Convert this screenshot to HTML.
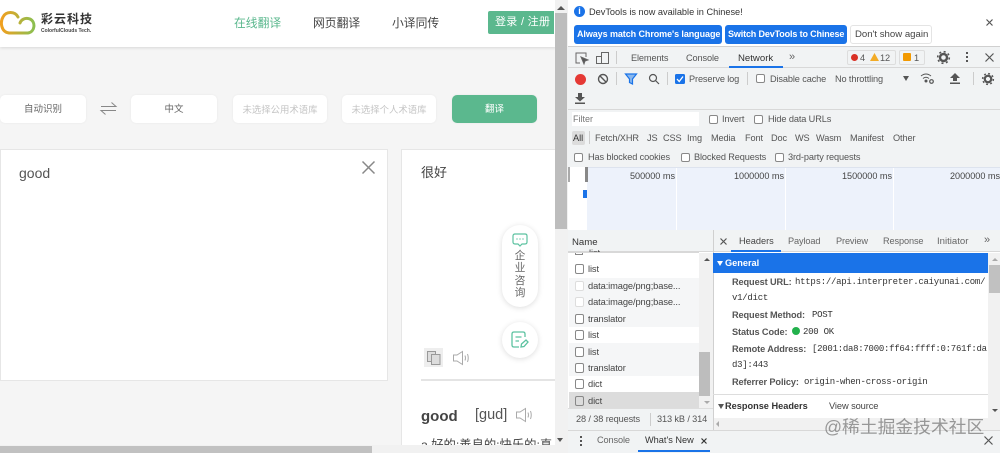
<!DOCTYPE html>
<html><head><meta charset="utf-8">
<style>
*{box-sizing:border-box}
html,body{margin:0;padding:0;width:1000px;height:453px;overflow:hidden;background:#f5f5f5;font-family:"Liberation Sans","Noto Sans CJK SC",sans-serif}
#w{position:absolute;left:0;top:0;width:1000px;height:453px;overflow:hidden;filter:blur(.3px)}
.t{position:absolute;white-space:nowrap;line-height:1}
.b{position:absolute}
.d{font-size:9.3px;letter-spacing:-.1px;color:#444}
.m{font-family:"Liberation Mono","DejaVu Sans Mono",monospace;font-size:9px;letter-spacing:-.26px;color:#333}
.k{font-weight:bold;font-size:9.2px;letter-spacing:-.1px;color:#555}
.c{position:absolute;width:9px;height:9px;border:1px solid #888;border-radius:2px;background:#fff}
.sel{position:absolute;top:95px;height:28px;background:#fff;border-radius:5px;font-size:9.5px;text-align:center;line-height:30px;box-shadow:0 0 2px rgba(0,0,0,.06)}
.g{font-size:9.2px;letter-spacing:-.12px;color:#555}
svg{position:absolute;overflow:visible}
</style></head><body><div id="w">

<!-- left page -->
<div class="b" style="left:0;top:0;width:556px;height:47px;background:#fff;box-shadow:0 1px 3px rgba(0,0,0,.12)"></div>
<svg style="left:0;top:10px" width="36" height="26" viewBox="0 0 36 26"><defs><linearGradient id="lg" x1="0" x2="1"><stop offset="0" stop-color="#f0a020"/><stop offset="1" stop-color="#8cbf50"/></linearGradient></defs><path d="M18 7C15 1 6 1 3 7C0 12 1 22 9 23H28C35 22 36 12 30 9C25 7 21 10 20 13" fill="none" stroke="url(#lg)" stroke-width="3" stroke-linecap="round"/></svg>
<div class="t" style="left:41px;top:13px;font-size:12px;font-weight:bold;color:#333;letter-spacing:1px">彩云科技</div>
<div class="t" style="left:41px;top:29px;font-size:5px;font-weight:bold;color:#444">ColorfulClouds Tech.</div>
<div class="t" style="left:234px;top:18px;font-size:11.8px;color:#5bb88e">在线翻译</div>
<div class="t" style="left:313px;top:18px;font-size:11.8px;color:#444">网页翻译</div>
<div class="t" style="left:392px;top:18px;font-size:11.8px;color:#444">小译同传</div>
<div class="b" style="left:488px;top:11px;width:66px;height:23px;background:#5bb88e;border-radius:2px 0 0 2px"></div>
<div class="t" style="left:495px;top:17px;font-size:11px;color:#fff;letter-spacing:.3px">登录 / 注册</div>

<div class="sel" style="left:0;width:86px;color:#666">自动识别</div>
<svg style="left:101px;top:102px" width="15" height="13" viewBox="0 0 15 13" fill="none" stroke="#888" stroke-width="1"><path d="M0 4.5H15L10.500 .5M15 8.500H0L4.500 12.500"/></svg>
<div class="sel" style="left:131px;width:86px;color:#666">中文</div>
<div class="sel" style="left:233px;width:94px;color:#c4c4c4;font-size:9.4px">未选择公用术语库</div>
<div class="sel" style="left:342px;width:94px;color:#c4c4c4;font-size:9.4px">未选择个人术语库</div>
<div class="sel" style="left:452px;width:85px;background:#5bb88e;color:#fff">翻译</div>

<div class="b" style="left:0;top:149px;width:388px;height:232px;background:#fff;border:1px solid #e6e6e6"></div>
<div class="t" style="left:19px;top:166px;font-size:14px;color:#555">good</div>
<svg style="left:362px;top:161px" width="13" height="13" viewBox="0 0 13 13" stroke="#888" stroke-width="1.500"><path d="M.5 .5L12.500 12.500M12.500 .5L.5 12.500"/></svg>

<div class="b" style="left:401px;top:149px;width:154px;height:296px;background:#fff;border-left:1px solid #e6e6e6;border-top:1px solid #e6e6e6"></div>
<div class="t" style="left:421px;top:166px;font-size:13px;color:#444">很好</div>
<div class="b" style="left:502px;top:225px;width:36px;height:82px;background:#fff;border-radius:18px;box-shadow:0 1px 6px rgba(0,0,0,.14)"></div>
<svg style="left:512px;top:233px" width="16" height="15" viewBox="0 0 16 15" fill="none" stroke="#5cc2a0" stroke-width="1.200"><path d="M3 1H13Q15 1 15 3V9Q15 11 13 11H10L8 13L6 11H3Q1 11 1 9V3Q1 1 3 1Z"/><path d="M4.500 6H5.500M7.500 6H8.500M10.500 6H11.500" stroke-width="1.400"/></svg>
<div class="t" style="left:514px;top:250px;font-size:10.8px;color:#666;line-height:12.3px;width:12px;white-space:normal;text-align:center">企业咨询</div>
<div class="b" style="left:502px;top:322px;width:36px;height:36px;background:#fff;border-radius:18px;box-shadow:0 1px 6px rgba(0,0,0,.14)"></div>
<svg style="left:511px;top:331px" width="18" height="18" viewBox="0 0 18 18" fill="none" stroke="#5cc2a0" stroke-width="1.300"><path d="M14 6V3Q14 1 12 1H3Q1 1 1 3V14Q1 16 3 16H8"/><path d="M4.500 6H10.500M4.500 10H8"/><path d="M10 16L10.500 13L15 9L17 11L13 15.500Z"/></svg>

<div class="b" style="left:424px;top:348px;width:19px;height:19px;background:#eeeeee"></div>
<svg style="left:427px;top:351px" width="14" height="14" viewBox="0 0 14 14" fill="#ddd" stroke="#999"><rect x=".5" y=".5" width="8" height="10"/><rect x="4.500" y="3.500" width="8.500" height="10"/></svg>
<svg style="left:453px;top:351px" width="17" height="14" viewBox="0 0 17 14" fill="none" stroke="#aaa"><path d="M.5 4H4L9.500 .5V13.500L4 10H.5Z"/><path d="M12 4.500Q13 7 12 9.500M14.500 3Q16 7 14.500 11"/></svg>
<div class="b" style="left:421px;top:379px;width:134px;height:2px;background:#e4e4e4"></div>
<div class="t" style="left:421px;top:409px;font-size:15px;font-weight:bold;color:#444">good</div>
<div class="t" style="left:475px;top:408px;font-size:14.5px;color:#555">[gud]</div>
<svg style="left:516px;top:408px" width="17" height="14" viewBox="0 0 17 14" fill="none" stroke="#aaa"><path d="M.5 4H4L9.500 .5V13.500L4 10H.5Z"/><path d="M12 4.500Q13 7 12 9.500M14.500 3Q16 7 14.500 11"/></svg>
<div class="t" style="left:421px;top:439px;font-size:12.3px;color:#444">a.好的;善良的;快乐的;真</div>

<!-- left scrollbars -->
<div class="b" style="left:0;top:445px;width:555px;height:8px;background:#f1f1f1"></div>
<div class="b" style="left:0;top:446px;width:372px;height:7px;background:#c1c1c1"></div>
<div class="b" style="left:555px;top:0;width:13px;height:453px;background:#f1f1f1"></div>
<div class="b" style="left:555px;top:13px;width:12px;height:216px;background:#bdbdbd"></div>
<div class="b" style="left:557px;top:6px;width:0;height:0;border:4px solid transparent;border-top:0;border-bottom:4px solid #555"></div>
<div class="b" style="left:557px;top:438px;width:0;height:0;border:3.5px solid transparent;border-bottom:0;border-top:4px solid #555"></div>

<!-- devtools -->
<div class="b" style="left:568px;top:0;width:432px;height:453px;background:#fff"></div>
<div class="b" style="left:574px;top:6px;width:11px;height:11px;border-radius:50%;background:#1a73e8;color:#fff;font-size:9px;font-weight:bold;text-align:center;line-height:11px">i</div>
<div class="t" style="left:589px;top:8px;font-size:9.2px;color:#333">DevTools is now available in Chinese!</div>
<div class="b" style="left:574px;top:25px;width:148px;height:19px;background:#1a73e8;border-radius:3px"></div>
<div class="t" style="left:577px;top:30px;font-size:9px;font-weight:bold;color:#fff;letter-spacing:-.08px">Always match Chrome's language</div>
<div class="b" style="left:725px;top:25px;width:122px;height:19px;background:#1a73e8;border-radius:3px"></div>
<div class="t" style="left:728px;top:30px;font-size:9px;font-weight:bold;color:#fff;letter-spacing:-.14px">Switch DevTools to Chinese</div>
<div class="b" style="left:850px;top:25px;width:82px;height:19px;background:#fff;border:1px solid #e4e4e4;border-radius:3px"></div>
<div class="t" style="left:855px;top:30px;font-size:9.6px;color:#444">Don't show again</div>
<svg style="left:986px;top:19px" width="7" height="7" stroke="#555" stroke-width="1.200"><path d="M.5 .5L6.500 6.500M6.500 .5L.5 6.500"/></svg>

<div class="b" style="left:568px;top:46px;width:432px;height:64px;background:#f1f3f4"></div>
<div class="b" style="left:568px;top:46px;width:432px;height:1px;background:#d0d0d0"></div>
<div class="b" style="left:568px;top:67px;width:432px;height:1px;background:#d8d8d8"></div>
<div class="b" style="left:568px;top:109px;width:432px;height:1px;background:#d8d8d8"></div>
<svg style="left:575px;top:52px" width="14" height="12" fill="none" stroke="#666"><path d="M5 11H1V1H11V5"/><path d="M6 5L13 8L10 9L9 12Z" fill="#555"/></svg>
<svg style="left:596px;top:52px" width="13" height="12" fill="none" stroke="#666"><rect x="5.500" y=".5" width="7" height="11"/><rect x=".5" y="4.500" width="5" height="7"/></svg>
<div class="b" style="left:616px;top:51px;width:1px;height:13px;background:#ccc"></div>
<div class="t g" style="left:631px;top:54px">Elements</div>
<div class="t g" style="left:686px;top:54px">Console</div>
<div class="t" style="left:738px;top:54px;font-size:9.6px;color:#333">Network</div>
<div class="b" style="left:729px;top:66px;width:54px;height:2px;background:#1a73e8"></div>
<div class="t" style="left:789px;top:52px;font-size:11px;color:#666">»</div>
<div class="b" style="left:847px;top:50px;width:49px;height:15px;border:1px solid #ddd;border-radius:2px"></div>
<div class="b" style="left:851px;top:54px;width:7px;height:7px;border-radius:50%;background:#d93025"></div>
<div class="t g" style="left:860px;top:54px">4</div>
<svg style="left:870px;top:53px" width="9" height="8"><path d="M4.500 0L9 8H0Z" fill="#f2ab26"/></svg>
<div class="t g" style="left:880px;top:54px">12</div>
<div class="b" style="left:899px;top:50px;width:26px;height:15px;border:1px solid #ddd;border-radius:2px"></div>
<div class="b" style="left:903px;top:53px;width:8px;height:8px;border-radius:1px;background:#f29900"></div>
<div class="t g" style="left:914px;top:54px">1</div>
<svg style="left:937px;top:51px" width="13" height="13" viewBox="0 0 13 13"><circle cx="6.500" cy="6.500" r="3.500" fill="none" stroke="#555" stroke-width="2.400"/><circle cx="6.500" cy="6.500" r="5.800" fill="none" stroke="#555" stroke-width="1.600" stroke-dasharray="2 2.550"/></svg>
<div class="b" style="left:966px;top:52px;width:2px;height:2px;background:#555;box-shadow:0 4px #555,0 8px #555"></div>
<svg style="left:985px;top:53px" width="9" height="9" stroke="#555" stroke-width="1.200"><path d="M.5 .5L8.500 8.500M8.500 .5L.5 8.500"/></svg>

<div class="b" style="left:575px;top:74px;width:11px;height:11px;border-radius:50%;background:#e53935"></div>
<svg style="left:597px;top:73px" width="12" height="12" fill="none" stroke="#555" stroke-width="1.400"><circle cx="6" cy="6" r="4.500"/><path d="M2.800 2.800L9.200 9.200"/></svg>
<div class="b" style="left:616px;top:72px;width:1px;height:13px;background:#ccc"></div>
<svg style="left:625px;top:73px" width="12" height="12"><path d="M.5 1H11.500L7.500 6V11L4.500 9.500V6Z" fill="#8ab8ee" stroke="#1a73e8" stroke-width="1.200"/></svg>
<svg style="left:648px;top:73px" width="12" height="12" fill="none" stroke="#555" stroke-width="1.200"><circle cx="5" cy="5" r="3.500"/><path d="M7.500 7.500L11 11"/></svg>
<div class="b" style="left:667px;top:72px;width:1px;height:13px;background:#ccc"></div>
<div class="b" style="left:675px;top:74px;width:10px;height:10px;background:#1a73e8;border-radius:1.500px"></div>
<svg style="left:676px;top:75px" width="8" height="8" fill="none" stroke="#fff" stroke-width="1.300"><path d="M1 4L3.200 6.500L7 1.500"/></svg>
<div class="t g" style="left:689px;top:75px">Preserve log</div>
<div class="b" style="left:747px;top:72px;width:1px;height:13px;background:#ccc"></div>
<div class="c" style="left:756px;top:74px"></div>
<div class="t g" style="left:770px;top:75px">Disable cache</div>
<div class="t g" style="left:835px;top:75px">No throttling</div>
<div class="b" style="left:903px;top:76px;width:0;height:0;border:3px solid transparent;border-bottom:0;border-top:5px solid #555"></div>
<svg style="left:920px;top:73px" width="14" height="11" fill="none" stroke="#555"><path d="M1 3Q6 -1 11 3M3 5.500Q6 3 9 5.500"/><circle cx="6" cy="8" r="1" fill="#555"/><circle cx="11.500" cy="8.500" r="1.800" stroke-width="1.200"/></svg>
<svg style="left:950px;top:73px" width="10" height="11" fill="#555"><path d="M5 0L10 5H7V8H3V5H0ZM0 9.500H10V11H0Z"/></svg>
<div class="b" style="left:973px;top:72px;width:1px;height:13px;background:#ccc"></div>
<svg style="left:982px;top:73px" width="12" height="12" viewBox="0 0 13 13"><circle cx="6.500" cy="6.500" r="3.500" fill="none" stroke="#555" stroke-width="2.400"/><circle cx="6.500" cy="6.500" r="5.800" fill="none" stroke="#555" stroke-width="1.600" stroke-dasharray="2 2.550"/></svg>
<svg style="left:575px;top:93px" width="10" height="11" fill="#555"><path d="M3 0H7V4H10L5 8.500L0 4H3ZM0 9.500H10V11H0Z"/></svg>

<div class="b" style="left:568px;top:110px;width:432px;height:57px;background:#f1f3f4"></div>
<div class="b" style="left:572px;top:112px;width:127px;height:14px;background:#fff"></div>
<div class="t" style="left:573px;top:115px;font-size:9px;color:#777">Filter</div>
<div class="c" style="left:709px;top:115px"></div>
<div class="t g" style="left:722px;top:115px">Invert</div>
<div class="c" style="left:754px;top:115px"></div>
<div class="t g" style="left:768px;top:115px">Hide data URLs</div>
<div class="b" style="left:572px;top:131px;width:13px;height:14px;background:#dcdcdc;border-radius:2px"></div>
<div class="t" style="left:573px;top:134px;font-size:9.2px;color:#333">All</div>
<div class="b" style="left:589px;top:131px;width:1px;height:13px;background:#ccc"></div>
<div class="t g" style="left:595px;top:134px">Fetch/XHR</div>
<div class="t g" style="left:647px;top:134px">JS</div>
<div class="t g" style="left:663px;top:134px">CSS</div>
<div class="t g" style="left:687px;top:134px">Img</div>
<div class="t g" style="left:711px;top:134px">Media</div>
<div class="t g" style="left:745px;top:134px">Font</div>
<div class="t g" style="left:771px;top:134px">Doc</div>
<div class="t g" style="left:795px;top:134px">WS</div>
<div class="t g" style="left:816px;top:134px">Wasm</div>
<div class="t g" style="left:850px;top:134px">Manifest</div>
<div class="t g" style="left:893px;top:134px">Other</div>
<div class="c" style="left:574px;top:153px"></div>
<div class="t g" style="left:588px;top:153px">Has blocked cookies</div>
<div class="c" style="left:681px;top:153px"></div>
<div class="t g" style="left:694px;top:153px">Blocked Requests</div>
<div class="c" style="left:775px;top:153px"></div>
<div class="t g" style="left:788px;top:153px">3rd-party requests</div>

<!-- overview -->
<div class="b" style="left:568px;top:167px;width:432px;height:63px;background:#edf2fb;border-top:1px solid #dde3ee"></div>
<div class="b" style="left:568px;top:167px;width:19px;height:63px;background:#fff"></div>
<div class="b" style="left:568px;top:167px;width:2px;height:15px;background:#aaa"></div>
<div class="b" style="left:585px;top:167px;width:3px;height:15px;background:#888"></div>
<div class="b" style="left:583px;top:190px;width:4px;height:8px;background:#1a73e8"></div>
<div class="b" style="left:676px;top:168px;width:1px;height:62px;background:#fff"></div>
<div class="b" style="left:785px;top:168px;width:1px;height:62px;background:#fff"></div>
<div class="b" style="left:893px;top:168px;width:1px;height:62px;background:#fff"></div>
<div class="t" style="left:630px;top:172px;font-size:9.1px;color:#444">500000 ms</div>
<div class="t" style="left:734px;top:172px;font-size:9.1px;color:#444">1000000 ms</div>
<div class="t" style="left:842px;top:172px;font-size:9.1px;color:#444">1500000 ms</div>
<div class="t" style="left:950px;top:172px;font-size:9.1px;color:#444">2000000 ms</div>

<!-- name column -->
<div class="b" style="left:568px;top:230px;width:145px;height:22px;background:#f1f3f4;border-bottom:1px solid #d8d8d8"></div>
<div class="t" style="left:572px;top:238px;font-size:9.6px;color:#333">Name</div>
<div class="b" style="left:713px;top:230px;width:1px;height:200px;background:#d0d0d0"></div>
<div class="b" style="left:569px;top:278px;width:130px;height:16px;background:#f5f6f7"></div>
<div class="b" style="left:569px;top:294px;width:130px;height:16px;background:#f5f6f7"></div>
<div class="b" style="left:569px;top:310px;width:130px;height:17px;background:#f5f6f7"></div>
<div class="b" style="left:569px;top:343px;width:130px;height:16px;background:#f5f6f7"></div>
<div class="b" style="left:569px;top:359px;width:130px;height:17px;background:#f5f6f7"></div>
<div class="b" style="left:569px;top:392px;width:130px;height:16px;background:#dcdcdc"></div>
<div class="b" style="left:699px;top:253px;width:14px;height:155px;background:#f1f1f1"></div>
<div class="b" style="left:699px;top:352px;width:11px;height:44px;background:#bdbdbd"></div>
<div class="b" style="left:704px;top:258px;width:0;height:0;border:3px solid transparent;border-top:0;border-bottom:3px solid #555"></div>
<div class="b" style="left:704px;top:401px;width:0;height:0;border:3px solid transparent;border-bottom:0;border-top:3px solid #aaa"></div>

<div class="b" style="left:575px;top:252px;width:8px;height:3px;border:1px solid #888;border-top:0"></div>
<div class="t d" style="left:589px;top:249px;height:4px;overflow:hidden;line-height:1">list</div>
<div class="b" style="left:568px;top:252px;width:131px;height:1px;background:#d8d8d8"></div>
<div class="c" style="left:575px;top:264px;height:10px"></div><div class="t d" style="left:588px;top:265px">list</div>
<div class="c" style="left:575px;top:281px;height:10px;border-color:#ddd"></div><div class="t d" style="left:588px;top:282px">data:image/png;base...</div>
<div class="c" style="left:575px;top:297px;height:10px;border-color:#ddd"></div><div class="t d" style="left:588px;top:298px">data:image/png;base...</div>
<div class="c" style="left:575px;top:314px;height:10px"></div><div class="t d" style="left:588px;top:315px">translator</div>
<div class="c" style="left:575px;top:330px;height:10px"></div><div class="t d" style="left:588px;top:331px">list</div>
<div class="c" style="left:575px;top:347px;height:10px"></div><div class="t d" style="left:588px;top:348px">list</div>
<div class="c" style="left:575px;top:363px;height:10px"></div><div class="t d" style="left:588px;top:364px">translator</div>
<div class="c" style="left:575px;top:379px;height:10px"></div><div class="t d" style="left:588px;top:380px">dict</div>
<div class="c" style="left:575px;top:396px;height:10px;background:#dcdcdc"></div><div class="t d" style="left:588px;top:397px">dict</div>

<div class="b" style="left:568px;top:408px;width:145px;height:22px;background:#f1f3f4;border-top:1px solid #ddd"></div>
<div class="t g" style="left:576px;top:415px">28 / 38 requests</div>
<div class="b" style="left:650px;top:413px;width:1px;height:13px;background:#ccc"></div>
<div class="t g" style="left:657px;top:415px">313 kB / 314</div>

<!-- details -->
<div class="b" style="left:714px;top:230px;width:286px;height:22px;background:#f1f3f4;border-bottom:1px solid #d8d8d8"></div>
<svg style="left:720px;top:238px" width="7" height="7" stroke="#555" stroke-width="1.200"><path d="M.5 .5L6.500 6.500M6.500 .5L.5 6.500"/></svg>
<div class="t" style="left:739px;top:237px;font-size:9.2px;color:#444">Headers</div>
<div class="b" style="left:731px;top:250px;width:50px;height:2px;background:#1a73e8"></div>
<div class="t g" style="left:788px;top:237px;color:#666">Payload</div>
<div class="t g" style="left:836px;top:237px;color:#666">Preview</div>
<div class="t g" style="left:883px;top:237px;color:#666">Response</div>
<div class="t" style="left:937px;top:237px;font-size:9.6px;color:#666">Initiator</div>
<div class="t" style="left:984px;top:235px;font-size:11px;color:#666">»</div>
<div class="b" style="left:713px;top:253px;width:275px;height:20px;background:#1a73e8"></div>
<div class="b" style="left:717px;top:261px;width:0;height:0;border:3px solid transparent;border-bottom:0;border-top:5px solid #fff"></div>
<div class="t" style="left:725px;top:259px;font-size:9.2px;font-weight:bold;color:#fff">General</div>
<div class="t k" style="left:732px;top:278px">Request URL:</div>
<div class="t m" style="left:795px;top:278px">https://api.interpreter.caiyunai.com/</div>
<div class="t m" style="left:732px;top:294px">v1/dict</div>
<div class="t k" style="left:732px;top:311px">Request Method:</div>
<div class="t m" style="left:812px;top:311px">POST</div>
<div class="t k" style="left:732px;top:328px">Status Code:</div>
<div class="b" style="left:792px;top:327px;width:8px;height:8px;border-radius:50%;background:#22b14c"></div>
<div class="t m" style="left:803px;top:328px">200 OK</div>
<div class="t k" style="left:732px;top:345px">Remote Address:</div>
<div class="t m" style="left:812px;top:345px">[2001:da8:7000:ff64:ffff:0:761f:da</div>
<div class="t m" style="left:732px;top:361px">d3]:443</div>
<div class="t k" style="left:732px;top:378px">Referrer Policy:</div>
<div class="t m" style="left:804px;top:378px">origin-when-cross-origin</div>
<div class="b" style="left:713px;top:394px;width:275px;height:1px;background:#ddd"></div>
<div class="b" style="left:718px;top:404px;width:0;height:0;border:3px solid transparent;border-bottom:0;border-top:5px solid #555"></div>
<div class="t" style="left:725px;top:402px;font-size:9.2px;font-weight:bold;color:#333">Response Headers</div>
<div class="t d" style="left:829px;top:402px">View source</div>
<div class="b" style="left:988px;top:253px;width:12px;height:165px;background:#f1f1f1"></div>
<div class="b" style="left:989px;top:265px;width:11px;height:28px;background:#c1c1c1"></div>
<div class="b" style="left:992px;top:258px;width:0;height:0;border:3px solid transparent;border-top:0;border-bottom:3px solid #aaa"></div>
<div class="b" style="left:992px;top:409px;width:0;height:0;border:3px solid transparent;border-bottom:0;border-top:3px solid #555"></div>
<div class="b" style="left:714px;top:418px;width:286px;height:12px;background:#f1f1f1"></div>
<div class="b" style="left:716px;top:421px;width:0;height:0;border:3px solid transparent;border-left:0;border-right:3px solid #aaa"></div>

<!-- drawer -->
<div class="b" style="left:568px;top:430px;width:432px;height:23px;background:#f1f3f4;border-top:1px solid #d8d8d8"></div>
<div class="b" style="left:580px;top:436px;width:2px;height:2px;background:#555;box-shadow:0 4px #555,0 8px #555"></div>
<div class="t g" style="left:597px;top:436px;color:#666">Console</div>
<div class="t" style="left:645px;top:436px;font-size:9.2px;color:#333">What's New</div>
<svg style="left:701px;top:438px" width="6" height="6" stroke="#333" stroke-width="1.200"><path d="M.5 .5L5.500 5.500M5.500 .5L.5 5.500"/></svg>
<div class="b" style="left:638px;top:450px;width:72px;height:2px;background:#1a73e8"></div>
<svg style="left:984px;top:436px" width="9" height="9" stroke="#555" stroke-width="1.200"><path d="M.5 .5L8.500 8.500M8.500 .5L.5 8.500"/></svg>

<!-- watermark -->
<div class="t" style="left:824px;top:419px;font-size:17.8px;color:rgba(120,120,120,.75)">@稀土掘金技术社区</div>

</div></body></html>
